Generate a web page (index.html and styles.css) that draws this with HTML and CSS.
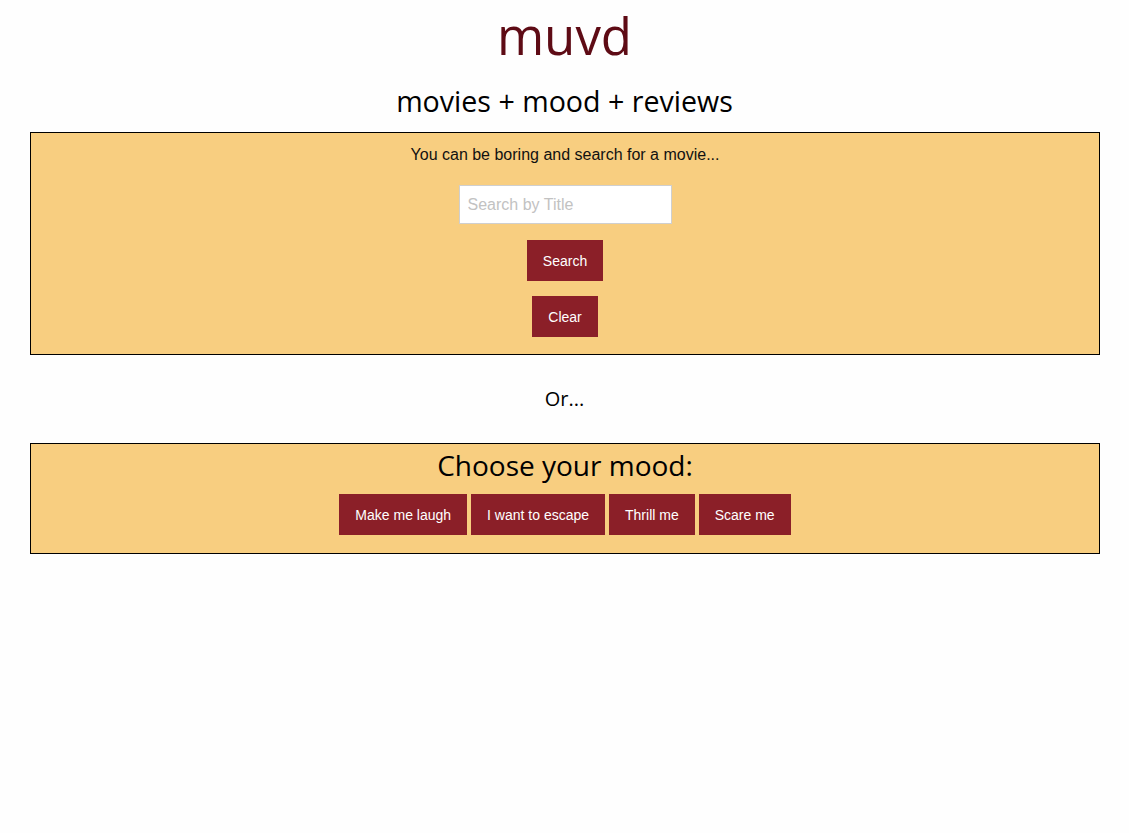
FILE: index.html
```html
<!DOCTYPE html>
<html lang="en">
<head>
<meta charset="utf-8">
<title>muvd</title>
<link rel="stylesheet" href="styles.css">
</head>
<body>
<header class="masthead">
  <h1 class="logo">muvd</h1>
  <h2 class="tagline">movies + mood + reviews</h2>
</header>
<section class="panel search-panel">
  <p class="intro">You can be boring and search for a movie...</p>
  <input class="title-input" type="text" placeholder="Search by Title">
  <button class="btn">Search</button>
  <button class="btn">Clear</button>
</section>
<p class="or">Or...</p>
<section class="panel mood-panel">
  <h3 class="mood-title">Choose your mood:</h3>
  <div class="mood-buttons">
    <button class="btn">Make me laugh</button>
    <button class="btn">I want to escape</button>
    <button class="btn">Thrill me</button>
    <button class="btn">Scare me</button>
  </div>
</section>
</body>
</html>
```

FILE: styles.css
```css
html, body {
  margin: 0;
  padding: 0;
  background: #fefefe;
}
body {
  font-family: "Liberation Sans", Arial, sans-serif;
  font-size: 16px;
  color: #111;
}
.masthead {
  text-align: center;
}
.logo {
  margin: 0;
  font-family: "Open Sans", sans-serif;
  font-weight: 400;
  font-size: 51px;
  line-height: 70px;
  color: #5e0b15;
}
.tagline {
  margin: 11px 0 11px;
  font-family: "Open Sans", sans-serif;
  font-weight: 400;
  font-size: 28.6px;
  line-height: 40px;
  color: #000;
}
.panel {
  margin: 0 29px 0 30px;
  border: 1px solid #000;
  background: #f8ce80;
  display: flex;
  flex-direction: column;
  align-items: center;
}
.search-panel {
  padding: 13px 0 17px;
}
.intro {
  margin: 0 0 21px;
  line-height: 18px;
}
.title-input {
  box-sizing: border-box;
  width: 213px;
  height: 39px;
  padding: 0 8px;
  border: 1px solid #cfcfcf;
  background: #fff;
  font-family: "Liberation Sans", Arial, sans-serif;
  font-size: 16px;
  outline: none;
  margin-bottom: 16px;
}
.title-input::placeholder {
  color: #c2c2c2;
}
.btn {
  box-sizing: border-box;
  height: 41px;
  padding: 0 16px;
  border: none;
  background: #8b1f28;
  color: #fff;
  font-family: "Liberation Sans", Arial, sans-serif;
  font-size: 14px;
  cursor: pointer;
}
.search-panel .btn + .btn {
  margin-top: 15px;
}
.or {
  margin: 0;
  padding: 32px 0 32px;
  text-align: center;
  font-family: "Open Sans", sans-serif;
  font-size: 20px;
  line-height: 24px;
  color: #000;
}
.mood-panel {
  padding: 2px 0 18px;
}
.mood-title {
  margin: 0 0 10px;
  font-family: "Open Sans", sans-serif;
  font-weight: 400;
  font-size: 28px;
  line-height: 38px;
  color: #000;
}
.mood-buttons {
  display: flex;
  gap: 4px;
  justify-content: center;
}
```
